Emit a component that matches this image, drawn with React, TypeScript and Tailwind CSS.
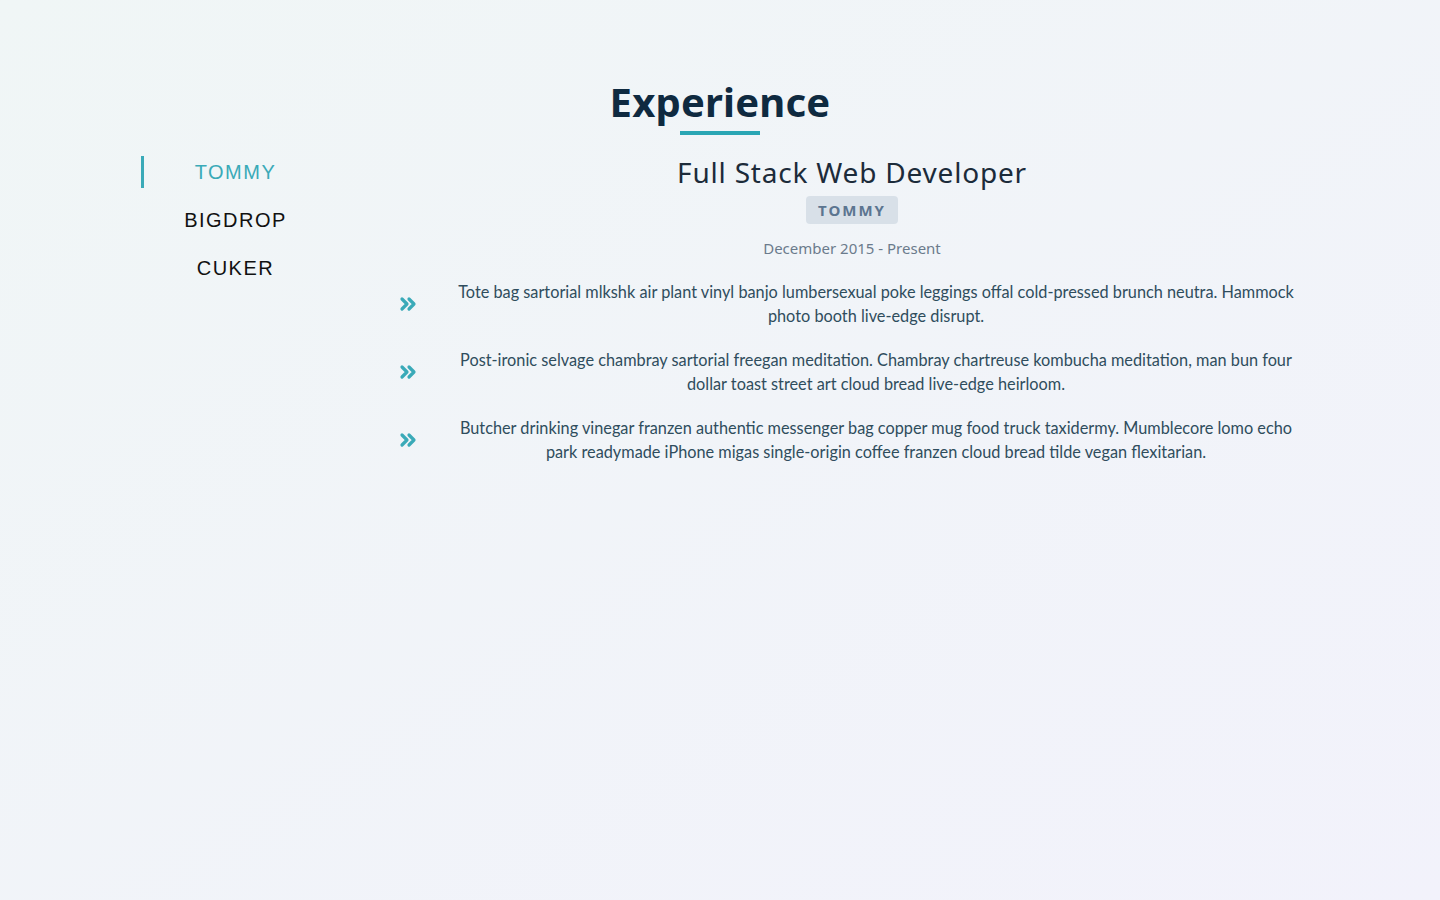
import React, { useState } from 'react';
import { ChevronsRight } from 'lucide-react';

const JOBS = [
  {
    company: 'TOMMY',
    title: 'Full Stack Web Developer',
    dates: 'December 2015 - Present',
    duties: [
      'Tote bag sartorial mlkshk air plant vinyl banjo lumbersexual poke leggings offal cold-pressed brunch neutra. Hammock photo booth live-edge disrupt.',
      'Post-ironic selvage chambray sartorial freegan meditation. Chambray chartreuse kombucha meditation, man bun four dollar toast street art cloud bread live-edge heirloom.',
      'Butcher drinking vinegar franzen authentic messenger bag copper mug food truck taxidermy. Mumblecore lomo echo park readymade iPhone migas single-origin coffee franzen cloud bread tilde vegan flexitarian.',
    ],
  },
  { company: 'BIGDROP', title: 'Front-End Engineer', dates: 'May 2015 - December 2015', duties: [] },
  { company: 'CUKER', title: 'Engineering Intern', dates: 'May 2014 - September 2015', duties: [] },
];

const App: React.FC = () => {
  const [active, setActive] = useState(0);
  const job = JOBS[active];

  return (
    <div className="min-h-screen bg-linear-to-br from-[#f0f6f6] to-[#f2f2fb] font-['Noto_Sans',sans-serif]">
      <section className="pt-[78px]">
        {/* heading */}
        <div className="flex flex-col items-center">
          <h2 className="text-[40px] leading-[48px] font-bold tracking-[0.2px] text-[#0f2a40]">Experience</h2>
          <div className="mt-[5px] h-1 w-20 bg-[#2aa6b4]"></div>
        </div>

        <div className="flex pl-[141px] mt-[21px]">
          {/* company tabs */}
          <div className="w-[186px] flex flex-col gap-4 font-['Liberation_Sans',Arial,sans-serif]">
            {JOBS.map((j, idx) => (
              <button
                key={j.company}
                onClick={() => setActive(idx)}
                className={`h-8 flex items-center justify-center text-[20px] tracking-[1.5px] border-l-[3px] ${
                  idx === active ? 'border-[#3aaab8] text-[#3aaab8]' : 'border-transparent text-[#111]'
                }`}
              >
                {j.company}
              </button>
            ))}
          </div>

          {/* job info */}
          <article className="ml-[61px] w-[928px] flex flex-col items-center">
            <h3 className="text-[28px] leading-8 tracking-[0.8px] text-[#1c2b3a]">{job.title}</h3>
            <span className="mt-2 h-7 px-3 flex items-center rounded bg-[#d8e0e8] text-[15px] font-bold tracking-[2px] text-[#5c7590]">
              {job.company}
            </span>
            <p className="mt-3 text-[15px] leading-6 text-[#6b7b8c]">{job.dates}</p>

            <div className="mt-5 w-full flex flex-col gap-5 pl-[8px] pr-3">
              {job.duties.map((d, idx) => (
                <div key={idx} className="flex items-center gap-[28px]">
                  <ChevronsRight className="w-6 h-6 shrink-0 text-[#3aaab8]" strokeWidth={3.2} />
                  <p className="flex-1 text-center font-['Lato',sans-serif] text-[16.3px] leading-6 text-[#2f4d5d]">{d}</p>
                </div>
              ))}
            </div>
          </article>
        </div>
      </section>
    </div>
  );
};

export default App;
